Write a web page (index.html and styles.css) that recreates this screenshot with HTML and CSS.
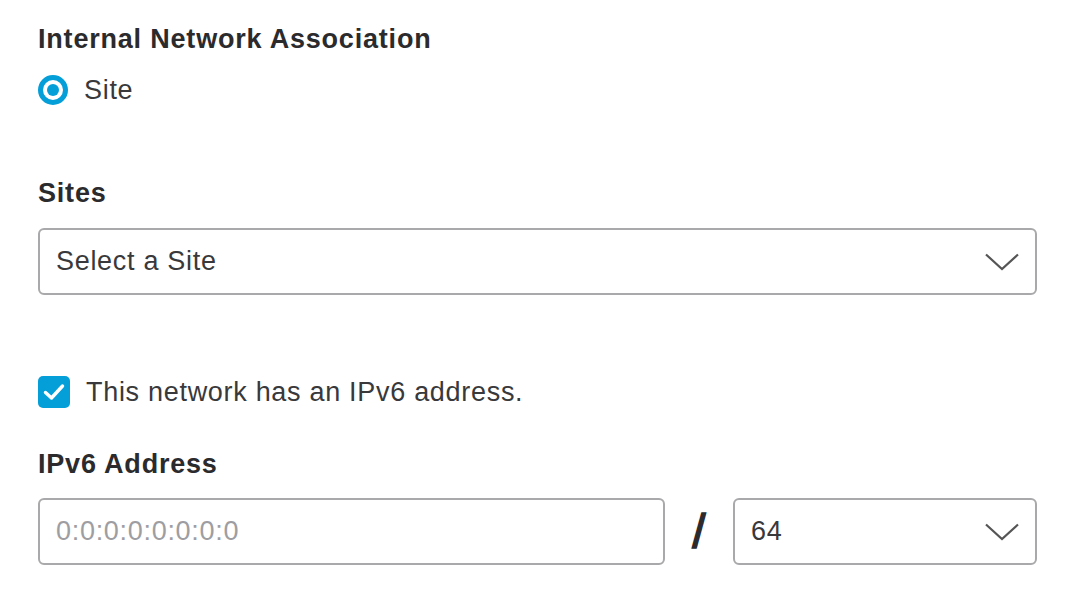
FILE: index.html
```html
<!DOCTYPE html>
<html>
<head>
<meta charset="utf-8" />
<title>Internal Network Association</title>
<link rel="stylesheet" href="styles.css">
</head>
<body>
<div class="form">
  <div class="head">Internal Network Association</div>
  <label class="choice radio-row">
    <span class="radio"><span class="dot"></span></span>
    <span>Site</span>
  </label>

  <div class="head sites-head">Sites</div>
  <div class="select wide">
    <span>Select a Site</span>
    <svg class="chev" width="34" height="18" viewBox="0 0 34 18"><path d="M1 1.5 L17 16 L33 1.5" fill="none" stroke="#555" stroke-width="2.2"/></svg>
  </div>

  <label class="choice check-row">
    <span class="check">
      <svg width="22" height="18" viewBox="0 0 22 18"><path d="M2.5 9.5 L8.5 15 L19.5 3" fill="none" stroke="#fff" stroke-width="3.4" stroke-linecap="round" stroke-linejoin="round"/></svg>
    </span>
    <span>This network has an IPv6 address.</span>
  </label>

  <div class="head ip-head">IPv6 Address</div>
  <div class="ip-row">
    <div class="input"><span class="ph">0:0:0:0:0:0:0:0</span></div>
    <div class="slash">/</div>
    <div class="select prefix">
      <span>64</span>
      <svg class="chev" width="34" height="18" viewBox="0 0 34 18"><path d="M1 1.5 L17 16 L33 1.5" fill="none" stroke="#555" stroke-width="2.2"/></svg>
    </div>
  </div>
</div>
</body>
</html>
```

FILE: styles.css
```css
*{box-sizing:border-box;}
body{margin:0;background:#fff;color:#39393b;font-family:"Liberation Sans",Arial,sans-serif;font-size:27px;letter-spacing:0.7px;}
.form{width:1037px;padding:23px 0 0 38px;}
.head{font-weight:bold;line-height:32px;color:#2b2b2d;letter-spacing:0.8px;}
.choice{display:flex;align-items:center;gap:16px;height:32px;line-height:32px;}
.radio-row{margin-top:19px;}
.radio{width:30px;height:30px;border-radius:50%;border:5px solid #049fd9;display:flex;align-items:center;justify-content:center;}
.radio .dot{width:12px;height:12px;border-radius:50%;background:#049fd9;}
.sites-head{margin-top:71px;}
.select,.input{height:67px;border:2px solid #a9a9ab;border-radius:6px;display:flex;align-items:center;padding:0 16px;}
.select{justify-content:space-between;}
.wide{margin-top:19px;}
.check-row{margin-top:81px;}
.check{width:32px;height:32px;border-radius:5px;background:#049fd9;display:flex;align-items:center;justify-content:center;}
.ip-head{margin-top:40px;}
.ip-row{display:flex;align-items:center;margin-top:18px;}
.input{width:627px;}
.ph{color:#9e9ea2;}
.slash{width:68px;text-align:center;font-size:48px;color:#2b2b2d;line-height:67px;letter-spacing:0;-webkit-text-stroke:1.5px #2b2b2d;}
.prefix{flex:1;}
```
